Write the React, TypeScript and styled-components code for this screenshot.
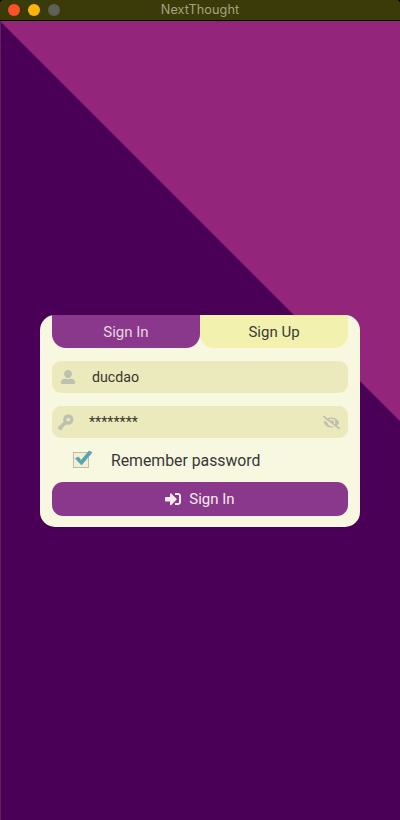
import React from "react";
import styled, { createGlobalStyle } from "styled-components";
import { FaUserAlt, FaEyeSlash, FaSignInAlt } from "react-icons/fa";

const GlobalStyle = createGlobalStyle`
  * { box-sizing: border-box; }
  body { margin: 0; background: #000; }
  button, input { font: inherit; border: 0; margin: 0; padding: 0; }
`;

const Window = styled.main`
  width: 400px;
  height: 820px;
  display: flex;
  flex-direction: column;
  overflow: hidden;
  background: #000;
  font-family: Roboto, sans-serif;
  color: #37373a;
`;

const TitleBar = styled.header`
  height: 20px;
  flex: none;
  display: grid;
  grid-template-columns: 66px 1fr 66px;
  align-items: center;
  background: #3b3b0a;
  border-radius: 4px 4px 0 0;
`;

const Lights = styled.div`
  display: flex;
  gap: 8px;
  padding-left: 8px;
`;

const Light = styled.span<{ $color: string }>`
  width: 12px;
  height: 12px;
  border-radius: 50%;
  background: ${(p) => p.$color};
`;

const Title = styled.div`
  text-align: center;
  font: 12.7px/20px Inter, sans-serif;
  letter-spacing: 0.05px;
  color: #a3a37c;
`;

const Content = styled.section`
  flex: 1;
  margin-top: 1px;
  padding: 294px 40px 0 39px;
  border-left: 1px solid #5f2062;
  background: linear-gradient(to top right, #4b0058 50%, #93267a 50.2%) -2px 0 / 401px 401px no-repeat #4b0058;
`;

const Card = styled.form`
  height: 212px;
  padding: 0 12px;
  border-radius: 15px;
  background: #f8f7df;
  display: flex;
  flex-direction: column;
`;

const Tabs = styled.div`
  display: grid;
  grid-template-columns: 1fr 1fr;
  margin-bottom: 13px;
`;

const Tab = styled.button<{ $active?: boolean }>`
  height: 33px;
  border-radius: 0 0 14px 14px;
  font-size: 15px;
  background: ${(p) => (p.$active ? "#8a388c" : "#f2f1ae")};
  color: ${(p) => (p.$active ? "#ebd5dd" : "#3d3d35")};
`;

const Field = styled.label`
  height: 32px;
  margin-bottom: 13px;
  padding: 0 8px;
  display: flex;
  align-items: center;
  border-radius: 9px;
  background: #ebeabd;
  color: #bdc1ae;
`;

const FieldIcon = styled.span<{ $width: number; $offset: number }>`
  display: flex;
  width: ${(p) => p.$width}px;
  margin-left: ${(p) => p.$offset}px;
`;

const FieldInput = styled.input`
  flex: 1;
  min-width: 0;
  height: 30px;
  font-size: 14.2px;
  background: transparent;
  color: #37372f;
  outline: none;
`;

const Remember = styled.div`
  height: 20px;
  margin: -1px 0 12px;
  display: flex;
  align-items: center;
  gap: 17px;
  padding-left: 20px;
  font-size: 15.8px;
`;

const Submit = styled.button`
  height: 34px;
  display: flex;
  align-items: center;
  justify-content: center;
  gap: 8px;
  border-radius: 11px;
  background: #8a388c;
  color: #f5ebe8;
  font-size: 15px;
`;

const CheckDrawing = styled.svg`
  flex: none;
`;

function CheckMark() {
  return (
    <CheckDrawing width="22" height="20" viewBox="0 0 22 20">
      <rect x="1.5" y="2.5" width="15" height="15" fill="#f0efd5" stroke="#bfbea9" />
      <path d="M3.5 8.5 6.5 7 9 10.5 17 1 20 2.5 9.5 15Z" fill="#45aabd" stroke="#7d9c90" strokeWidth="0.8" />
    </CheckDrawing>
  );
}

function KeyDrawing() {
  return (
    <svg width="17" height="17" viewBox="0 0 17 17" fill="none" stroke="currentColor">
      <circle cx="11.3" cy="5.5" r="3.5" strokeWidth="3.3" />
      <path d="M8.8 8.2 1.6 15" strokeWidth="3.6" />
      <path d="M2.5 13.5 5 15.7" strokeWidth="2.2" />
    </svg>
  );
}

export default function App() {
  return (
    <Window>
      <GlobalStyle />
      <TitleBar>
        <Lights>
          <Light $color="#fb5228" />
          <Light $color="#fdb50c" />
          <Light $color="#5f6056" />
        </Lights>
        <Title>NextThought</Title>
      </TitleBar>
      <Content>
        <Card>
          <Tabs>
            <Tab type="button" $active>Sign In</Tab>
            <Tab type="button">Sign Up</Tab>
          </Tabs>
          <Field>
            <FieldIcon $width={31} $offset={1}>
              <FaUserAlt size={14} />
            </FieldIcon>
            <FieldInput defaultValue="ducdao" />
          </Field>
          <Field>
            <FieldIcon $width={32} $offset={-3}>
              <KeyDrawing />
            </FieldIcon>
            <FieldInput defaultValue="********" />
            <FaEyeSlash size={17} />
          </Field>
          <Remember>
            <CheckMark />
            Remember password
          </Remember>
          <Submit type="button">
            <FaSignInAlt size={16} />
            Sign In
          </Submit>
        </Card>
      </Content>
    </Window>
  );
}
